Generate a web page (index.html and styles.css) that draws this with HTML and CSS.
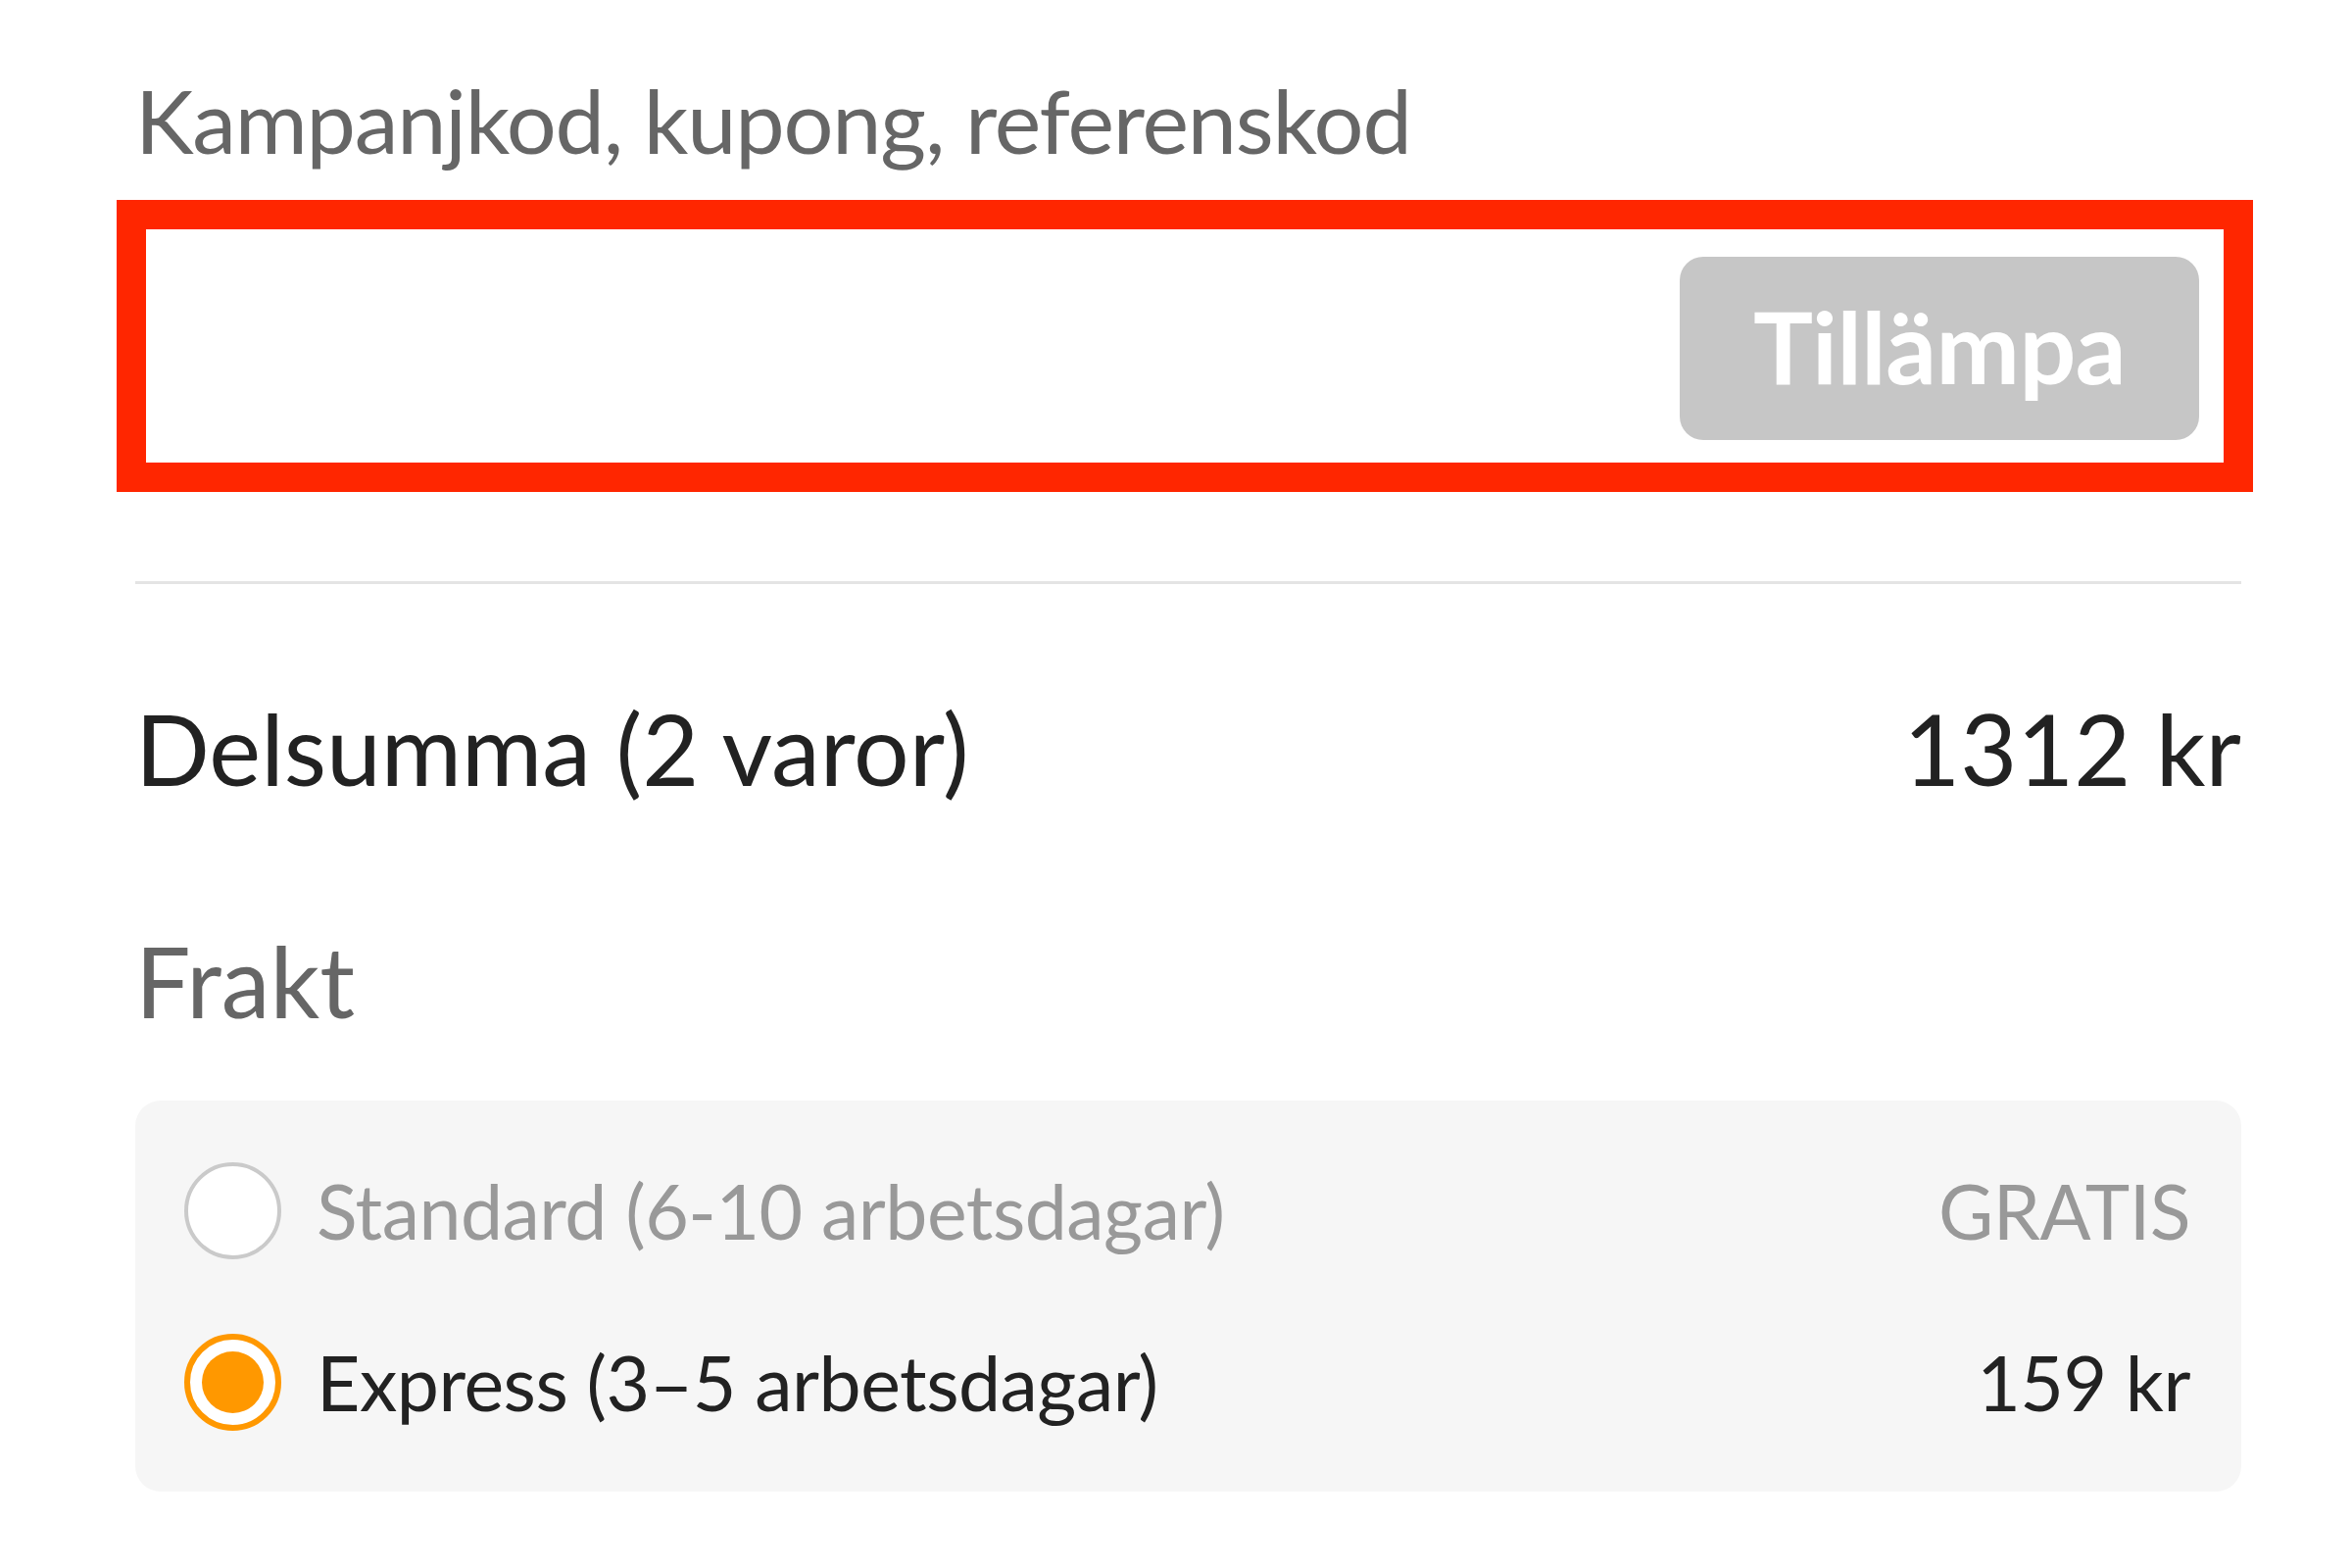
FILE: index.html
```html
<!DOCTYPE html>
<html lang="sv">
<head>
  <meta charset="UTF-8">
  <title>Varukorg</title>
  <link rel="stylesheet" href="styles.css">
</head>
<body>
  <div class="summary">
    <!-- Kampanjkod -->
    <label class="promo-label" for="promoCode">Kampanjkod, kupong, referenskod</label>
    <div class="promo-box">
      <input type="text" id="promoCode" class="promo-input">
      <button class="apply-btn" disabled>Tillämpa</button>
    </div>

    <hr class="divider">

    <!-- Delsumma -->
    <div class="total-row">
      <span>Delsumma (2 varor)</span>
      <span>1312 kr</span>
    </div>

    <!-- Frakt -->
    <div class="shipping-title">Frakt</div>
    <div class="shipping-box">
      <label class="ship-option">
        <span class="radio"></span>
        <span class="ship-name">Standard (6-10 arbetsdagar)</span>
        <span class="ship-price">GRATIS</span>
      </label>
      <label class="ship-option selected">
        <span class="radio"></span>
        <span class="ship-name">Express (3–5 arbetsdagar)</span>
        <span class="ship-price">159 kr</span>
      </label>
    </div>
  </div>
</body>
</html>
```

FILE: styles.css
```css
body {
  margin: 0;
  background-color: #ffffff;
  font-family: 'Lato', 'Noto Sans', sans-serif;
}

.summary {
  width: 2149px;
  margin-left: 138px;
  padding-top: 68px;
}

/* Promo code */
.promo-label {
  display: block;
  font-size: 90px;
  line-height: 108px;
  letter-spacing: -1.2px;
  color: #666666;
}

.promo-box {
  display: flex;
  align-items: center;
  height: 238px;
  margin: 28px -12px 0 -19px;
  padding: 0 25px 0 0;
  box-sizing: content-box;
  border: 30px solid #ff2600;
  background: #ffffff;
}

.promo-input {
  flex: 1;
  height: 100%;
  border: 0;
  outline: none;
  background: transparent;
}

.apply-btn {
  width: 530px;
  height: 187px;
  margin-top: 5px;
  padding-bottom: 8px;
  border: 0;
  border-radius: 24px;
  background-color: #c6c6c6;
  color: #ffffff;
  font-family: 'Lato', 'Noto Sans', sans-serif;
  font-size: 102px;
  font-weight: 700;
  letter-spacing: -0.5px;
}

.divider {
  border: 0;
  height: 3px;
  background: #e4e4e4;
  margin: 91px 0 0 0;
}

/* Totals */
.total-row {
  display: flex;
  justify-content: space-between;
  margin-top: 107px;
  font-size: 100px;
  line-height: 120px;
  color: #222222;
}

.shipping-title {
  margin-top: 117px;
  font-size: 100px;
  line-height: 120px;
  color: #666666;
}

/* Shipping options */
.shipping-box {
  margin-top: 63px;
  padding: 62px 52px 62px 50px;
  background-color: #f6f6f6;
  border-radius: 26px;
  display: flex;
  flex-direction: column;
  gap: 75px;
}

.ship-option {
  display: flex;
  align-items: center;
  height: 100px;
  font-size: 77px;
  letter-spacing: -0.5px;
  color: #999999;
}

.radio {
  width: 99px;
  height: 99px;
  box-sizing: border-box;
  border: 4px solid #cacaca;
  border-radius: 50%;
  background: #ffffff;
  display: flex;
  align-items: center;
  justify-content: center;
  margin-right: 36px;
}

.ship-name {
  flex: 1;
}

.ship-option.selected {
  color: #222222;
}

.ship-option.selected .radio {
  border: 6px solid #ff9800;
}

.ship-option.selected .radio::after {
  content: "";
  width: 63px;
  height: 63px;
  border-radius: 50%;
  background: #ff9800;
}
```
